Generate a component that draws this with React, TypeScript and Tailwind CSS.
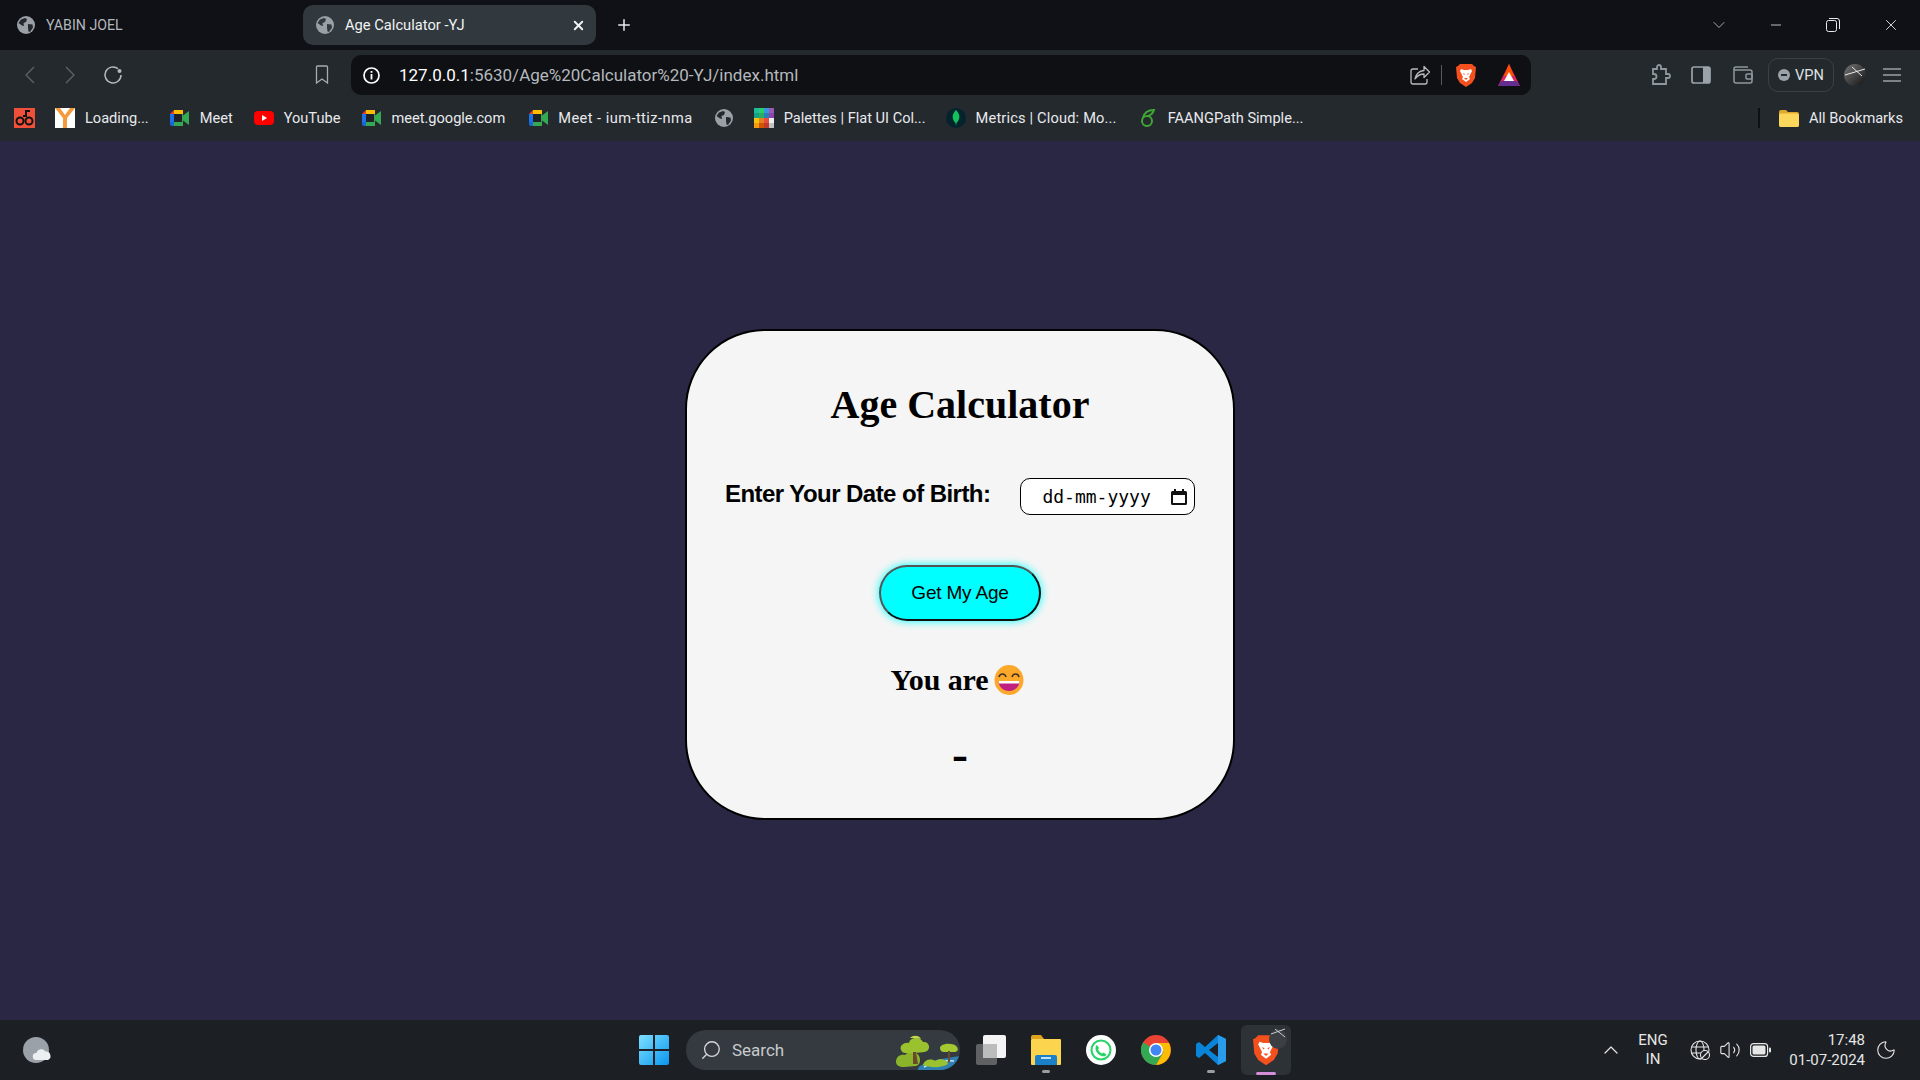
import { Plus, X, ChevronDown, Minus, Search, ChevronUp, Volume2, Moon } from "lucide-react";

const ui = "font-['Roboto',sans-serif]";

const Globe = ({ size = 18, light = "#9aa0a6", dark = "#24292d" }: { size?: number; light?: string; dark?: string }) => (
  <svg width={size} height={size} viewBox="0 0 18 18">
    <circle cx="9" cy="9" r="9" fill={light} />
    <path d="M4 3.5l4-1.5 2 1-1 3-2.5 1L7 10l-2-.5L1.5 7zM11 8l4.500.5.500 3-3 4.500-1.500-.5-.5-3.500z" fill={dark} />
  </svg>
);

const MeetIcon = () => (
  <svg width="19" height="16" viewBox="0 0 19 16">
    <path d="M4 0h9v4H4z" fill="#fbbc04" />
    <path d="M4 0v4H0z" fill="#ea4335" />
    <path d="M0 4h4v8H0z" fill="#1a73e8" />
    <path d="M0 12h4v4H2a2 2 0 0 1-2-2z" fill="#1967d2" />
    <path d="M4 12h9v4H4z" fill="#34a853" />
    <path d="M12 4h1v8h-1z" fill="#34a853" />
    <path d="M13 5.500L19 1v14l-6-4.500z" fill="#34a853" />
    <rect x="4" y="4" width="8" height="8" fill="#1e2226" />
  </svg>
);

const BraveLion = ({ size = 22 }: { size?: number }) => (
  <svg width={size} height={size * 1.2} viewBox="0 0 20 24">
    <path d="M4 1h12l2 2 2 1-1 11-3 5-6 4-6-4-3-5L0 4l2-1z" fill="#f4501e" />
    <path d="M5 6l3 1h4l3-1 1 2-2 4-1 2 1 2-4 3-4-3 1-2-1-2-2-4z" fill="#fff" />
    <path d="M7 10l2 1-1 1zM13 10l-2 1 1 1zM8 15h4l-2 2z" fill="#f4501e" />
  </svg>
);

function Bookmark({ icon, label, className, labelClass = "" }: { icon: React.ReactNode; label: string; className: string; labelClass?: string }) {
  return (
    <div className={`flex items-center shrink-0 ${className}`}>
      <span className="w-[20px] flex justify-center">{icon}</span>
      <span className={`ml-[10px] mt-[1px] text-[14.6px] text-[#e8eaed] whitespace-nowrap ${labelClass}`}>{label}</span>
    </div>
  );
}

function TabBar() {
  return (
    <div className={`h-[50px] bg-[#0f1116] flex items-center ${ui}`}>
      <div className="w-[303px] flex items-center pl-[17px]">
        <Globe />
        <span className="ml-[11px] mt-[1px] text-[14.2px] text-[#b4b8bc]">YABIN JOEL</span>
      </div>
      <div className="w-[293px] h-[40px] rounded-[10px] bg-[#32393e] flex items-center pl-[13px] pr-[10px]">
        <Globe dark="#32393e" />
        <span className="ml-[11px] mt-[1px] text-[14.7px] text-[#f1f3f4]">Age Calculator -YJ</span>
        <X size={15} strokeWidth={3} className="ml-auto text-[#f1f3f4]" />
      </div>
      <Plus size={18} strokeWidth={2} className="ml-[19px] text-[#e8eaed]" />
      <ChevronDown size={20} strokeWidth={1} className="ml-auto text-[#c4c7ca]" />
      <Minus size={16} strokeWidth={1.2} className="ml-[39px] text-[#e8eaed]" />
      <svg width="14" height="14" viewBox="0 0 14 14" className="ml-[42px]" fill="none" stroke="#e8eaed">
        <rect x="0.500" y="2.500" width="10" height="11" rx="2" />
        <path d="M3 .500h8a2.500 2.500 0 0 1 2.500 2.500v8" />
      </svg>
      <X size={18} strokeWidth={1.2} className="ml-[42px] mr-[20px] text-[#e8eaed]" />
    </div>
  );
}

function Toolbar() {
  return (
    <div className={`h-[45px] bg-[#24292d] flex items-start pt-[5px] ${ui}`}>
      <div className="h-[40px] w-[351px] flex items-center shrink-0">
        <svg width="12" height="18" viewBox="0 0 12 18" fill="none" stroke="#5d6368" strokeWidth="1.300" className="ml-[24px]">
          <path d="M10 1L2 9l8 8" />
        </svg>
        <svg width="12" height="18" viewBox="0 0 12 18" fill="none" stroke="#5d6368" strokeWidth="1.300" className="ml-[28px]">
          <path d="M2 1l8 8-8 8" />
        </svg>
        <svg width="20" height="20" viewBox="0 0 20 20" fill="none" stroke="#b6babd" strokeWidth="1.500" className="ml-[27px]">
          <path d="M18 10a8 8 0 1 1-3-6.300" />
          <circle cx="16.500" cy="6" r="2" fill="#b6babd" stroke="none" />
        </svg>
        <svg width="14" height="20" viewBox="0 0 14 20" fill="none" stroke="#a6abaf" strokeWidth="1.300" className="ml-[192px]">
          <path d="M1.500 2a1 1 0 0 1 1-1h9a1 1 0 0 1 1 1v16L7 14l-5.500 4z" />
        </svg>
      </div>
      <div className="h-[40px] w-[1180px] rounded-[10px] bg-[#0e1014] flex items-center shrink-0 pl-[12px]">
        <svg width="17" height="17" viewBox="0 0 17 17">
          <circle cx="8.500" cy="8.500" r="7.500" fill="none" stroke="#fff" strokeWidth="1.700" />
          <rect x="7.600" y="7" width="1.800" height="5.500" fill="#fff" />
          <rect x="7.600" y="4" width="1.800" height="1.800" fill="#fff" />
        </svg>
        <span className="ml-[19px] mt-[1px] text-[17px] whitespace-nowrap">
          <span className="text-white">127.0.0.1</span>
          <span className="text-[#b5b9bd]">:5630/Age%20Calculator%20-YJ/index.html</span>
        </span>
        {/* open box with the arrow leaving its top right corner */}
        <svg width="20" height="20" viewBox="0 0 20 20" fill="none" stroke="#b6babd" strokeWidth="1.300" strokeLinejoin="round" className="ml-auto">
          <path d="M8 4H3a2 2 0 0 0-2 2v11a2 2 0 0 0 2 2h12a2 2 0 0 0 2-2v-3" />
          <path d="M5 14c1-5 4-8 9-8.500V1.500L19.500 7 14 12.500V9c-4 0-7 2-9 5z" />
        </svg>
        <span className="ml-[11px] w-px h-[20px] bg-[#565b60]" />
        <span className="ml-[14px] flex">
          <BraveLion size={20} />
        </span>
        <svg width="24" height="24" viewBox="0 0 24 24" className="ml-[21px] mr-[10px]">
          <path d="M12 1L1 23h22z" fill="#e0245e" />
          <path d="M12 1L7 13h10z" fill="#ff5000" />
          <path d="M12 9l-5 9h10z" fill="#fff" />
          <path d="M1 23l3-5h16l3 5z" fill="#662d91" />
        </svg>
      </div>
      <div className="h-[40px] flex items-center grow min-w-0">
        <svg width="22" height="22" viewBox="0 0 22 22" fill="none" stroke="#8f989e" strokeWidth="1.800" className="ml-[119px]">
          <path d="M3 5h4V3a2 2 0 0 1 4 0v2h5v5h2a2 2 0 0 1 0 4h-2v6H3v-5h1a2.500 2.500 0 0 0 0-5H3z" />
        </svg>
        <svg width="20" height="18" viewBox="0 0 20 18" className="ml-[19px]">
          <rect x="1" y="1" width="18" height="16" rx="2" fill="none" stroke="#9aa3a9" strokeWidth="1.700" />
          <rect x="12" y="1" width="7" height="16" fill="#9aa3a9" />
        </svg>
        <svg width="20" height="18" viewBox="0 0 20 18" fill="none" stroke="#8f989e" strokeWidth="1.500" className="ml-[22px]">
          <path d="M15 1H3a2 2 0 0 0-2 2v12a2 2 0 0 0 2 2h14a2 2 0 0 0 2-2V6a2 2 0 0 0-2-2H1" />
          <rect x="13" y="8" width="6" height="5" rx="1" />
        </svg>
        <div className="ml-[15px] w-[66px] h-[34px] rounded-[10px] border border-[#3a4146] flex items-center pl-[9px]">
          <svg width="12" height="12" viewBox="0 0 12 12">
            <circle cx="6" cy="6" r="6" fill="#9aa3a9" />
            <rect x="3" y="5" width="6" height="2" fill="#24292d" />
          </svg>
          <span className="ml-[5px] mt-[1px] text-[14.6px] text-[#dfe1e3]">VPN</span>
        </div>
        <svg width="22" height="22" viewBox="0 0 22 22" className="ml-[10px]">
          <defs>
            <linearGradient id="avatar" x1="0" y1="0" x2="1" y2="1">
              <stop offset="0" stopColor="#777" />
              <stop offset="1" stopColor="#111" />
            </linearGradient>
          </defs>
          <circle cx="11" cy="11" r="11" fill="url(#avatar)" />
          <path d="M1 11l20-6M8 3l10 9" stroke="#e8eaed" strokeWidth="1" />
        </svg>
        <svg width="18" height="14" viewBox="0 0 18 14" stroke="#98a0a6" strokeWidth="1.400" className="ml-[17px]">
          <path d="M0 1h18M0 7h18M0 13h18" />
        </svg>
      </div>
    </div>
  );
}

function BookmarksBar() {
  return (
    <div className={`h-[46px] bg-[#24292d] flex items-center ${ui}`}>
      <svg width="21" height="20" viewBox="0 0 21 20" className="ml-[14px] shrink-0">
        <rect width="21" height="20" fill="#f0503a" />
        <circle cx="6" cy="13" r="3.500" fill="none" stroke="#111" strokeWidth="2" />
        <circle cx="15" cy="13" r="3.500" fill="none" stroke="#111" strokeWidth="2" />
        <path d="M9 8h3V3h4" fill="none" stroke="#111" strokeWidth="2" />
      </svg>
      <Bookmark
        className="ml-[20px]"
        label="Loading..."
        icon={
          <svg width="20" height="20" viewBox="0 0 20 20">
            <rect width="20" height="20" fill="#fff" />
            <path d="M0 0h5l5 7 5-7h5L12 10v10H8V10z" fill="#f49a3c" />
          </svg>
        }
      />
      <Bookmark className="ml-[21px]" label="Meet" icon={<MeetIcon />} />
      <Bookmark
        className="ml-[21px]"
        label="YouTube"
        icon={
          <svg width="20" height="14" viewBox="0 0 20 14">
            <rect width="20" height="14" rx="4" fill="#f00" />
            <path d="M8 4l5 3-5 3z" fill="#fff" />
          </svg>
        }
      />
      <Bookmark className="ml-[21px]" label="meet.google.com" icon={<MeetIcon />} />
      <Bookmark className="ml-[23px]" labelClass="tracking-[0.45px]" label="Meet - ium-ttiz-nma" icon={<MeetIcon />} />
      <span className="ml-[22px] w-[18px] flex">
        <Globe />
      </span>
      <Bookmark
        className="ml-[21px]"
        label="Palettes | Flat UI Col..."
        icon={
          <svg width="20" height="20" viewBox="0 0 4 4" shapeRendering="crispEdges">
            <path d="M0 0h1v1H0z" fill="#1abc9c" />
            <path d="M1 0h1v1H1z" fill="#2ecc71" />
            <path d="M2 0h1v1H2z" fill="#3498db" />
            <path d="M3 0h1v1H3z" fill="#9b59b6" />
            <path d="M0 1h1v1H0z" fill="#16a085" />
            <path d="M1 1h1v1H1z" fill="#27ae60" />
            <path d="M2 1h1v1H2z" fill="#2980b9" />
            <path d="M3 1h1v1H3z" fill="#8e44ad" />
            <path d="M0 2h1v1H0z" fill="#f1c40f" />
            <path d="M1 2h1v1H1z" fill="#e67e22" />
            <path d="M2 2h1v1H2z" fill="#e74c3c" />
            <path d="M3 2h1v1H3z" fill="#ecf0f1" />
            <path d="M0 3h1v1H0z" fill="#f39c12" />
            <path d="M1 3h1v1H1z" fill="#d35400" />
            <path d="M2 3h1v1H2z" fill="#c0392b" />
            <path d="M3 3h1v1H3z" fill="#bdc3c7" />
          </svg>
        }
      />
      <Bookmark
        className="ml-[20px]"
        labelClass="tracking-[0.18px]"
        label="Metrics | Cloud: Mo..."
        icon={
          <svg width="20" height="20" viewBox="0 0 20 20">
            <circle cx="10" cy="10" r="10" fill="#04232c" />
            <path d="M10 2c3 3 4 6 3 9-.5 2-2 3-2.500 4l-.5 3-.5-3C9 14 7.500 13 7 11c-1-3 0-6 3-9z" fill="#13c05e" />
          </svg>
        }
      />
      <Bookmark
        className="ml-[21px]"
        label="FAANGPath Simple..."
        icon={
          <svg width="16" height="20" viewBox="0 0 16 20" fill="none" stroke="#3fa535" strokeWidth="2">
            <circle cx="7" cy="13" r="5" />
            <path d="M3 10c1-5 5-8 11-8-1 3-3 5-6 6" />
          </svg>
        }
      />
      <span className="ml-auto w-[2px] h-[20px] bg-[#0e1014] shrink-0" />
      <svg width="20" height="17" viewBox="0 0 20 17" className="ml-[19px] shrink-0">
        <path d="M0 2a2 2 0 0 1 2-2h5l2 2h9a2 2 0 0 1 2 2v11a2 2 0 0 1-2 2H2a2 2 0 0 1-2-2z" fill="#e0a82e" />
        <rect y="3.500" width="20" height="13.500" rx="2" fill="#fbd75b" />
      </svg>
      <span className="ml-[10px] mr-[17px] mt-[1px] text-[14.6px] text-[#e8eaed] whitespace-nowrap">All Bookmarks</span>
    </div>
  );
}

function GrinEmoji() {
  return (
    <svg width="30" height="30" viewBox="0 0 30 30">
      <ellipse cx="15" cy="15" rx="14.500" ry="15" fill="#fba82b" />
      <path d="M5 12c1-4 6-4 7 0M18 12c1-4 6-4 7 0" fill="none" stroke="#42302a" strokeWidth="1.600" />
      <path d="M4.500 16h21c0 6-5 10-10.500 10S4.500 22 4.500 16z" fill="#c0207f" />
      <path d="M4.500 16h21l-.5 2.500H5z" fill="#fff" />
    </svg>
  );
}

function Card() {
  return (
    <div className="w-[550px] h-[491px] mt-[188px] rounded-[80px] border-2 border-black bg-[#f5f5f5] flex flex-col items-center text-black">
      <h1 className="mt-[51px] text-[40px] leading-[46px] font-bold font-['Liberation_Serif',serif]">Age Calculator</h1>
      <div className="mt-[50px] w-full flex items-center pl-[38px] h-[37px]">
        <label className="text-[24px] leading-[28px] tracking-[-0.55px] font-bold font-['Liberation_Sans',sans-serif] -mt-[5px]">Enter Your Date of Birth:</label>
        <div className="ml-[30px] w-[175px] h-[37px] rounded-[10px] border border-black bg-white flex items-center pl-[21px] pr-[7px]">
          <span className="text-[18px] font-['DejaVu_Sans_Mono',monospace] whitespace-nowrap">dd-mm-yyyy</span>
          <svg width="16" height="16" viewBox="0 0 16 16" className="ml-auto">
            <path d="M3 0h2v2h6V0h2v2h1.500A1.500 1.500 0 0 1 16 3.500v11a1.500 1.500 0 0 1-1.500 1.500h-13A1.500 1.500 0 0 1 0 14.500v-11A1.500 1.500 0 0 1 1.500 2H3zM2 6v8h12V6z" fill="#111" />
          </svg>
        </div>
      </div>
      <button className="mt-[50px] w-[162px] h-[56px] rounded-[28px] border-2 border-[#111] border-t-[#555] border-l-[#555] bg-[#00ffff] shadow-[0_0_8px_#00ffff] text-[19px] tracking-[-0.2px] font-['Liberation_Sans',sans-serif]">
        Get My Age
      </button>
      <div className="mt-[42px] mr-[5px] flex items-center h-[34px]">
        <span className="text-[30px] leading-[34px] tracking-[-0.1px] font-bold font-['Liberation_Serif',serif]">You are</span>
        <span className="ml-[6px] flex">
          <GrinEmoji />
        </span>
      </div>
      <div className="mt-[34px] text-[48px] leading-[46px] font-bold font-['Liberation_Serif',serif]">-</div>
    </div>
  );
}

function Taskbar() {
  return (
    <div className={`h-[60px] bg-[#1c2024] flex items-center relative ${ui}`}>
      <svg width="32" height="28" viewBox="0 0 32 28" className="ml-[22px] shrink-0">
        <circle cx="14" cy="14" r="13" fill="#9aa1a8" />
        <path d="M14 24a3.500 3.500 0 0 1 .5-7 5 5 0 0 1 9-1.500 4.500 4.500 0 0 1 2.500 8.500z" fill="#eceff1" />
      </svg>
      <svg width="30" height="30" viewBox="0 0 30 30" className="ml-[585px] shrink-0">
        <defs>
          <linearGradient id="win" x1="0" y1="0" x2="1" y2="1">
            <stop offset="0" stopColor="#7ee0ff" />
            <stop offset="1" stopColor="#0a96f0" />
          </linearGradient>
        </defs>
        <path d="M0 2a2 2 0 0 1 2-2h12v14H0zM16 0h12a2 2 0 0 1 2 2v12H16zM0 16h14v14H2a2 2 0 0 1-2-2zM16 16h14v12a2 2 0 0 1-2 2H16z" fill="url(#win)" />
      </svg>
      <div className="ml-[17px] w-[274px] h-[40px] rounded-[20px] bg-[#343a40] flex items-center pl-[14px] shrink-0 overflow-hidden">
        <Search size={22} strokeWidth={1.5} className="text-[#d5d7d9] -scale-x-100" />
        <span className="ml-[10px] mt-[1px] text-[17px] text-[#c8cacc]">Search</span>
        <svg width="64" height="36" viewBox="0 0 64 36" className="ml-auto self-end">
          <path d="M22 36c-1-6 14-10 42-14v14z" fill="#2f7fb0" />
          <path d="M28 33c8-5 20-7 30-6" fill="none" stroke="#bfe6f5" strokeWidth="1.500" />
          <path d="M0 28c0-6 5-8 9-7 3-4 12-4 14 1 2 4 1 9-3 10l-12 1c-5 0-8-2-8-5z" fill="#8bb42a" />
          <path d="M5 16c-2-5 4-8 8-7 1-6 11-7 14-1 6-1 8 6 4 9-3 2-18 2-22 2-2 0-3-1-4-3z" fill="#9ac22e" />
          <path d="M14 4c3-3 9-3 11 1-3-1-7-1-11-1z" fill="#c5d84a" />
          <path d="M27 31c1-5 8-7 12-4 4-3 12-2 13 3-6 4-18 4-25 1z" fill="#9ac22e" />
          <path d="M44 14c0-5 14-6 17-1 2 3 0 5-3 5H48c-3 0-4-2-4-4z" fill="#a3c832" />
          <path d="M17 18h3l2 12h-5zM52 17h2v11h-2z" fill="#6b4a2b" />
        </svg>
      </div>
      <svg width="30" height="30" viewBox="0 0 30 30" className="ml-[16px] shrink-0">
        <rect x="0" y="9" width="21" height="21" rx="2" fill="#5f6163" />
        <rect x="7" y="0" width="23" height="23" rx="2" fill="#f4f4f4" />
        <rect x="7" y="9" width="14" height="14" fill="#bcbcbc" />
      </svg>
      <svg width="30" height="30" viewBox="0 0 30 30" className="ml-[25px] shrink-0">
        <path d="M0 2a2 2 0 0 1 2-2h8l3 4H0z" fill="#e0a31d" />
        <rect y="4" width="30" height="26" rx="1" fill="#fdd44e" />
        <path d="M6 20h18a2 2 0 0 1 2 2v8H4v-8a2 2 0 0 1 2-2z" fill="#1b80c8" />
        <rect x="10" y="22" width="10" height="2" fill="#bfe0f5" />
      </svg>
      <svg width="30" height="30" viewBox="0 0 30 30" className="ml-[25px] shrink-0">
        <circle cx="15" cy="15" r="15" fill="#fff" />
        <circle cx="15" cy="15" r="9.500" fill="none" stroke="#25d366" strokeWidth="2" />
        <path d="M11 10l2 3-1 1.500c1 2 2 3 4 4l1.500-1 3 2c-1 2-3 2.500-6 1-3-1.500-5-4-5-7 0-1.500.5-3 1.500-3.500z" fill="#25d366" />
      </svg>
      <svg width="30" height="30" viewBox="0 0 30 30" className="ml-[25px] shrink-0">
        <circle cx="15" cy="15" r="15" fill="#ea4335" />
        <path d="M15 15L2 7.500A15 15 0 0 0 15 30l7.500-13z" fill="#34a853" />
        <path d="M15 8h13a15 15 0 0 1-13 22l7.500-13z" fill="#fbbc04" />
        <circle cx="15" cy="15" r="7" fill="#fff" />
        <circle cx="15" cy="15" r="5.500" fill="#4285f4" />
      </svg>
      <svg width="30" height="30" viewBox="0 0 30 30" className="ml-[25px] shrink-0">
        <path d="M22 0l8 4v22l-8 4-13-12-6 5-3-2v-12l3-2 6 5z" fill="#0a84d8" />
        <path d="M22 8L13 15l9 7z" fill="#1c2024" />
        <path d="M22 0l8 4v22l-8 4z" fill="#2a9bea" />
      </svg>
      <div className="ml-[15px] w-[50px] h-[50px] rounded-[6px] bg-[#2d3236] flex items-center justify-center shrink-0 relative">
        <BraveLion size={26} />
        <svg width="22" height="24" viewBox="0 0 22 24" className="absolute right-[2px] top-[1px]">
          <ellipse cx="11" cy="13" rx="9" ry="10" fill="#3b3f44" />
          <path d="M4 8l14-5M8 3l10 8" stroke="#c9cdd0" strokeWidth="1" />
        </svg>
        <span className="absolute bottom-0 left-[15px] w-[20px] h-[3px] rounded bg-[#d58fd8]" />
      </div>
      {/* running-app dots */}
      <span className="absolute left-[1042px] top-[50px] w-[8px] h-[3px] rounded bg-[#9a9d9f]" />
      <span className="absolute left-[1207px] top-[50px] w-[8px] h-[3px] rounded bg-[#9a9d9f]" />

      <ChevronUp size={24} strokeWidth={1.2} className="ml-[308px] text-[#e6e6e6] shrink-0" />
      <div className="ml-[10px] w-[40px] text-center text-[15px] leading-[19px] text-[#e6e6e6] shrink-0">
        <div>ENG</div>
        <div>IN</div>
      </div>
      <svg width="20" height="20" viewBox="0 0 20 20" fill="none" stroke="#e6e6e6" strokeWidth="1.100" className="ml-[17px] shrink-0">
        <circle cx="10" cy="10" r="9" />
        <ellipse cx="10" cy="10" rx="4" ry="9" />
        <path d="M1 7h18M1 13h18" />
        <circle cx="15" cy="15" r="4.500" fill="#1c2024" />
        <path d="M12 18l6-6" />
      </svg>
      <Volume2 size={22} strokeWidth={1.2} className="ml-[9px] text-[#e6e6e6] shrink-0" />
      <svg width="21" height="14" viewBox="0 0 21 14" className="ml-[9px] shrink-0">
        <rect x=".600" y=".600" width="17" height="12.800" rx="3" fill="none" stroke="#e6e6e6" strokeWidth="1.200" />
        <rect x="2.500" y="2.500" width="13" height="9" rx="1.500" fill="#e6e6e6" />
        <rect x="19" y="4.500" width="2" height="5" rx="1" fill="#e6e6e6" />
      </svg>
      <div className="ml-auto text-right text-[15px] leading-[20px] text-[#e6e6e6] shrink-0">
        <div>17:48</div>
        <div>01-07-2024</div>
      </div>
      <Moon size={22} strokeWidth={1.2} className="ml-[10px] mr-[23px] text-[#e6e6e6] shrink-0" />
    </div>
  );
}

export default function App() {
  return (
    <div className="w-[1920px] h-[1080px] flex flex-col overflow-hidden bg-[#2a2744]">
      <TabBar />
      <Toolbar />
      <BookmarksBar />
      <main className="h-[879px] flex justify-center items-start">
        <Card />
      </main>
      <Taskbar />
    </div>
  );
}
